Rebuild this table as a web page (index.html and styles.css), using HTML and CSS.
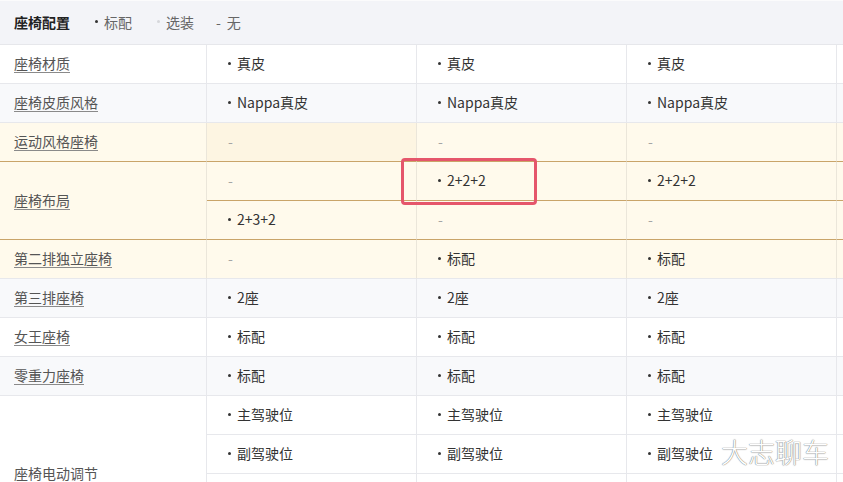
FILE: index.html
```html
<!DOCTYPE html>
<html lang="zh-CN">
<head>
<meta charset="utf-8">
<title>座椅配置</title>
<link rel="stylesheet" href="styles.css">
</head>
<body>
<div class="page">
  <div class="head">
    <span class="head-title">座椅配置</span>
    <span class="legend legend-std"><i class="dot"></i>标配</span>
    <span class="legend legend-opt"><i class="dot dot-light"></i>选装</span>
    <span class="legend legend-none"><span class="dash-h">-</span>无</span>
  </div>

  <div class="grid">
    <!-- 座椅材质 -->
    <div class="cell label">座椅材质</div>
    <div class="cell"><i class="dot"></i>真皮</div>
    <div class="cell"><i class="dot"></i>真皮</div>
    <div class="cell"><i class="dot"></i>真皮</div>
    <div class="cell"></div>

    <!-- 座椅皮质风格 -->
    <div class="cell label alt">座椅皮质风格</div>
    <div class="cell alt"><i class="dot"></i>Nappa真皮</div>
    <div class="cell alt"><i class="dot"></i>Nappa真皮</div>
    <div class="cell alt"><i class="dot"></i>Nappa真皮</div>
    <div class="cell alt"></div>

    <!-- 运动风格座椅 -->
    <div class="cell label hl line-b">运动风格座椅</div>
    <div class="cell hl line-b hl-strong"><span class="dash">-</span></div>
    <div class="cell hl line-b"><span class="dash">-</span></div>
    <div class="cell hl line-b"><span class="dash">-</span></div>
    <div class="cell hl line-b"></div>

    <!-- 座椅布局 -->
    <div class="cell label hl line-b span2">座椅布局</div>
    <div class="cell hl line-b"><span class="dash">-</span></div>
    <div class="cell hl line-b"><i class="dot"></i>2+2+2</div>
    <div class="cell hl line-b"><i class="dot"></i>2+2+2</div>
    <div class="cell hl line-b"></div>
    <div class="cell hl line-b"><i class="dot"></i>2+3+2</div>
    <div class="cell hl line-b"><span class="dash">-</span></div>
    <div class="cell hl line-b"><span class="dash">-</span></div>
    <div class="cell hl line-b"></div>

    <!-- 第二排独立座椅 -->
    <div class="cell label hl">第二排独立座椅</div>
    <div class="cell hl"><span class="dash">-</span></div>
    <div class="cell hl"><i class="dot"></i>标配</div>
    <div class="cell hl"><i class="dot"></i>标配</div>
    <div class="cell hl"></div>

    <!-- 第三排座椅 -->
    <div class="cell label alt">第三排座椅</div>
    <div class="cell alt"><i class="dot"></i>2座</div>
    <div class="cell alt"><i class="dot"></i>2座</div>
    <div class="cell alt"><i class="dot"></i>2座</div>
    <div class="cell alt"></div>

    <!-- 女王座椅 -->
    <div class="cell label">女王座椅</div>
    <div class="cell"><i class="dot"></i>标配</div>
    <div class="cell"><i class="dot"></i>标配</div>
    <div class="cell"><i class="dot"></i>标配</div>
    <div class="cell"></div>

    <!-- 零重力座椅 -->
    <div class="cell label alt">零重力座椅</div>
    <div class="cell alt"><i class="dot"></i>标配</div>
    <div class="cell alt"><i class="dot"></i>标配</div>
    <div class="cell alt"><i class="dot"></i>标配</div>
    <div class="cell alt"></div>

    <!-- 座椅电动调节 -->
    <div class="cell label span4">座椅电动调节</div>
    <div class="cell"><i class="dot"></i>主驾驶位</div>
    <div class="cell"><i class="dot"></i>主驾驶位</div>
    <div class="cell"><i class="dot"></i>主驾驶位</div>
    <div class="cell"></div>
    <div class="cell"><i class="dot"></i>副驾驶位</div>
    <div class="cell"><i class="dot"></i>副驾驶位</div>
    <div class="cell"><i class="dot"></i>副驾驶位</div>
    <div class="cell"></div>
    <div class="cell"></div>
    <div class="cell"></div>
    <div class="cell"></div>
    <div class="cell"></div>
    <div class="cell"></div>
    <div class="cell"></div>
    <div class="cell"></div>
    <div class="cell"></div>
  </div>

  <div class="mark-box"></div>
  <div class="watermark">大志聊车</div>
</div>
</body>
</html>
```

FILE: styles.css
```css
* {
  box-sizing: border-box;
}

html,
body {
  margin: 0;
  padding: 0;
}

body {
  width: 843px;
  height: 482px;
  overflow: hidden;
  background: #ffffff;
  font-family: "Noto Sans CJK SC", "Noto Sans", sans-serif;
  font-size: 14px;
  color: #333333;
}

.page {
  position: relative;
  width: 843px;
  height: 482px;
  overflow: hidden;
}

/* header */
.head {
  width: 1060px;
  height: 45px;
  border-top: 1px solid #fbfbfc;
  border-bottom: 1px solid #e6e7eb;
  background: #f3f4f8;
  display: flex;
  align-items: center;
  padding-left: 14px;
  padding-bottom: 2px;
  line-height: 20px;
}

.head-title {
  font-weight: bold;
  color: #222222;
}

.legend {
  display: flex;
  align-items: center;
  color: #666666;
}

.legend-std {
  margin-left: 25px;
}

.legend-opt {
  margin-left: 25px;
}

.legend-none {
  margin-left: 22px;
}

.dash-h {
  color: #666666;
  margin-right: 6px;
}

/* grid */
.grid {
  width: 1060px;
  display: grid;
  grid-template-columns: 207px 210px 210px 210px 210px;
  grid-auto-rows: 39px;
}

.cell {
  display: flex;
  align-items: center;
  padding-left: 21px;
  padding-bottom: 2px;
  border-right: 1px solid #e7e8ec;
  border-bottom: 1px solid #e7e8ec;
  background: #ffffff;
  line-height: 20px;
  white-space: nowrap;
  color: #333333;
}

.cell.alt {
  background: #f8f9fb;
}

.cell.hl {
  background: #fffaec;
  border-right-color: #ebe6da;
}

.cell.hl-strong {
  background: #fdf5e2;
}

.cell.line-b {
  border-bottom-color: #c9a469;
}

.label {
  padding-left: 14px;
  color: #555555;
  text-decoration: underline;
  text-decoration-color: #8a8a8a;
  text-underline-offset: 3px;
}

.span2 {
  grid-row: span 2;
}

.span4 {
  grid-row: span 4;
}

.dot {
  display: inline-block;
  width: 3px;
  height: 3px;
  border-radius: 50%;
  background: #333333;
  margin-right: 6px;
  flex: none;
}

.dot-light {
  background: #d6d7db;
}

.dash {
  color: #a5a5a5;
}

/* overlays */
.mark-box {
  position: absolute;
  left: 401px;
  top: 158px;
  width: 136px;
  height: 47px;
  border: 3px solid #e5566b;
  border-radius: 4px;
}

.watermark {
  position: absolute;
  left: 721px;
  top: 434px;
  font-size: 27px;
  line-height: 36px;
  font-weight: 300;
  color: #ffffff;
  text-shadow: 0 0 1px #7a7a7a, 0 0 1px #7a7a7a;
}
```
